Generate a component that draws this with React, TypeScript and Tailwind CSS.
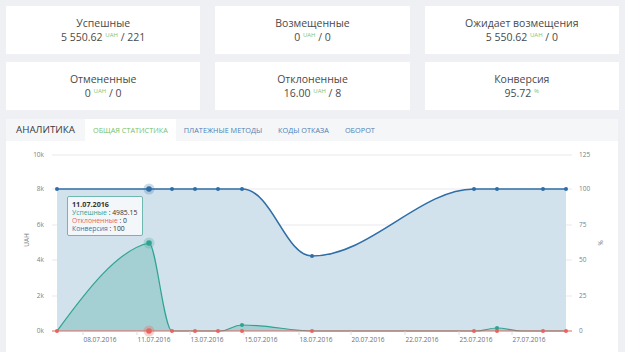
import React from 'react';

const font = { fontFamily: '"Open Sans", "Noto Sans", sans-serif' };

const cards = [
  { title: 'Успешные', value: '5 550.62', unit: 'UAH', count: '221' },
  { title: 'Возмещенные', value: '0', unit: 'UAH', count: '0' },
  { title: 'Ожидает возмещения', value: '5 550.62', unit: 'UAH', count: '0' },
  { title: 'Отмененные', value: '0', unit: 'UAH', count: '0' },
  { title: 'Отклоненные', value: '16.00', unit: 'UAH', count: '8' },
  { title: 'Конверсия', value: '95.72', unit: '%', count: null },
];

const tabs = ['ОБЩАЯ СТАТИСТИКА', 'ПЛАТЕЖНЫЕ МЕТОДЫ', 'КОДЫ ОТКАЗА', 'ОБОРОТ'];

// page coordinates are used directly inside the svg (viewBox offset)
const bluePts: [number, number][] = [
  [57, 189], [149, 189], [172, 189], [195, 189], [218, 189], [242, 189],
  [312, 256], [474, 189], [497, 189], [543, 189], [566, 189],
];
const gridY = [155, 189, 225, 260, 296, 331];
const leftLabels = ['10k', '8k', '6k', '4k', '2k', '0k'];
const rightLabels = ['125', '100', '75', '50', '25', '0'];
const dates = [
  ['08.07.2016', 100],
  ['11.07.2016', 154],
  ['13.07.2016', 207],
  ['15.07.2016', 261],
  ['18.07.2016', 316],
  ['20.07.2016', 368],
  ['22.07.2016', 422],
  ['25.07.2016', 476],
  ['27.07.2016', 529],
] as const;

const blueLine =
  'M57,189 L242,189 C272,189 285,256 312,256 C370,256 420,189 474,189 L566,189';
const greenLine =
  'M57,331 C80,300 115,250 149,243 C156,243 164,331 172,331 L220,331 C230,331 232,325 242,325 C270,325 290,331 312,331 L476,331 C485,331 488,328 497,328 C506,328 512,331 522,331 L566,331';

function StatCard({ c }: { c: (typeof cards)[number] }) {
  return (
    <div className="bg-white h-[48px] pt-[10px] text-center text-[10.5px] leading-[14px] text-[#4a4a4a]">
      <div>{c.title}</div>
      <div>
        {c.value} <sup className="text-[6px] text-[#7cc576] top-[-4px]">{c.unit}</sup>
        {c.count !== null && <> / {c.count}</>}
      </div>
    </div>
  );
}

function Chart() {
  return (
    <div className="relative bg-white h-[230px]">
      <svg width={612} height={230} viewBox="6 141 612 230" style={font}>
        {gridY.slice(0, 5).map((y) => (
          <line key={y} x1={52} x2={572} y1={y} y2={y} stroke="#e8e9ec" strokeWidth={1} />
        ))}
        <path d={`${blueLine} L566,331 L57,331 Z`} fill="#d2e2ed" />
        <path d={`${greenLine} Z`} fill="#a5d0d3" />
        <path d={blueLine} fill="none" stroke="#2f6ea6" strokeWidth={1.6} />
        <path d={greenLine} fill="none" stroke="#2fa391" strokeWidth={1.2} />
        <line x1={52} x2={572} y1={331} y2={331} stroke="#e8645e" strokeWidth={1} />
        {dates.map(([, x]) => (
          <line key={x} x1={x - 17} x2={x - 17} y1={331} y2={335} stroke="#cfd3d8" strokeWidth={0.8} />
        ))}
        {bluePts.map(([x, y]) => (
          <circle key={'b' + x} cx={x} cy={y} r={2} fill="#2f6ea6" />
        ))}
        {bluePts.map(([x]) => (
          <circle key={'r' + x} cx={x} cy={331} r={2} fill="#e8645e" />
        ))}
        <circle cx={242} cy={325} r={2} fill="#2fa391" />
        <circle cx={497} cy={328} r={2} fill="#2fa391" />

        <circle cx={149} cy={189} r={5.5} fill="#2f6ea6" fillOpacity={0.25} />
        <circle cx={149} cy={189} r={2.8} fill="#2f6ea6" />
        <circle cx={149} cy={243} r={5.5} fill="#2fa391" fillOpacity={0.25} />
        <circle cx={149} cy={243} r={2.8} fill="#2fa391" />
        <circle cx={149} cy={331} r={5.5} fill="#e8645e" fillOpacity={0.3} />
        <circle cx={149} cy={331} r={2.8} fill="#e8645e" />

        {gridY.map((y, i) => (
          <text key={'l' + y} x={44} y={y + 2.3} textAnchor="end" fontSize={6.5} fill="#7a7f86">
            {leftLabels[i]}
          </text>
        ))}
        {gridY.map((y, i) => (
          <text key={'rr' + y} x={579} y={y + 2.3} fontSize={6.5} fill="#7a7f86">
            {rightLabels[i]}
          </text>
        ))}
        {dates.map(([d, x]) => (
          <text key={d} x={x} y={342} textAnchor="middle" fontSize={6.5} fill="#6b7077">
            {d}
          </text>
        ))}
        <text x={29} y={240} textAnchor="middle" fontSize={6.5} fill="#7a7f86" transform="rotate(-90 29 240)">
          UAH
        </text>
        <text x={598} y={243} textAnchor="middle" fontSize={6.5} fill="#7a7f86" transform="rotate(90 598 243)">
          %
        </text>
      </svg>

      {/* tooltip */}
      <div
        className="absolute left-[61px] top-[55px] w-[76px] h-[40px] border border-[#6fb8b0] rounded-[2px] bg-[#f7fafa]/90 px-[4px] pt-[3px] text-[6.8px] leading-[8px] text-[#333] whitespace-nowrap"
        style={font}
      >
        <div className="font-bold text-[7.2px] leading-[9px]">11.07.2016</div>
        <div>
          <span className="text-[#2fa391]">Успешные</span> : 4985.15
        </div>
        <div>
          <span className="text-[#e8645e]">Отклоненные</span> : 0
        </div>
        <div>
          <span className="text-[#3f72b0]">Конверсия</span> : 100
        </div>
      </div>
    </div>
  );
}

export default function App() {
  return (
    <div className="min-h-screen bg-[#eef0f3] px-[6px] pt-[6px] overflow-hidden" style={font}>
      {/* Stat cards */}
      <div className="grid grid-cols-3 gap-x-[15px] gap-y-[8px]">
        {cards.map((c) => (
          <StatCard key={c.title} c={c} />
        ))}
      </div>

      {/* Analytics */}
      <div className="mt-[9px] w-[612px]">
        <div className="flex items-stretch h-[22px] bg-[#f5f6f8]">
          <div className="flex items-center pl-[10px] pr-[10px] text-[9.8px] text-[#3a3a3a]">АНАЛИТИКА</div>
          {tabs.map((t, i) => (
            <div
              key={t}
              className={`flex items-center px-[8px] text-[7.3px] ${
                i === 0 ? 'bg-white text-[#74c26c]' : 'text-[#4d7fb6]'
              }`}
            >
              {t}
            </div>
          ))}
        </div>
        <Chart />
      </div>
    </div>
  );
}
